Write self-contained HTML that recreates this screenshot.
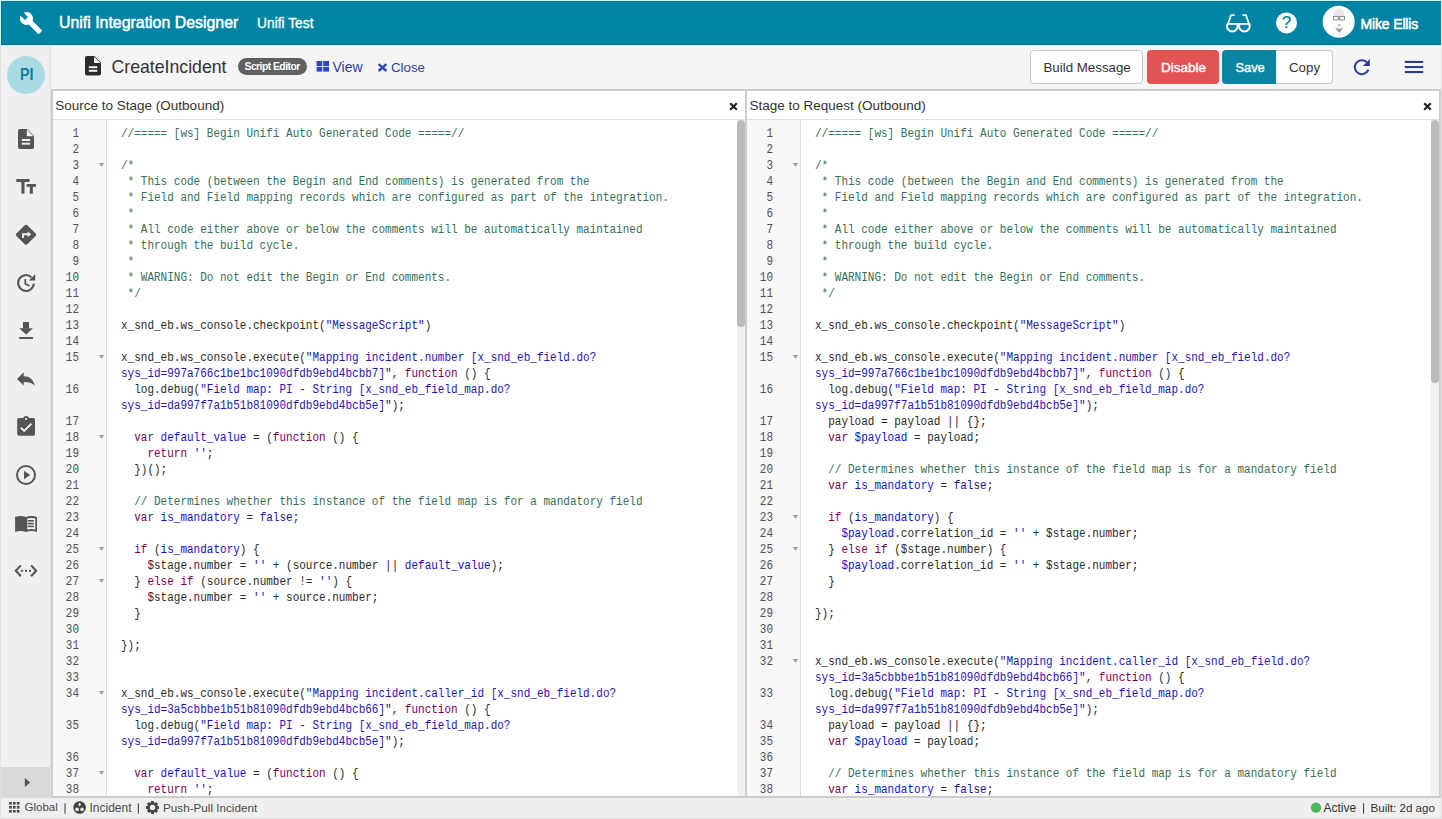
<!DOCTYPE html>
<html><head><meta charset="utf-8">
<style>
*{box-sizing:border-box;margin:0;padding:0}
html,body{width:1442px;height:819px;overflow:hidden;background:#e0e0e0;font-family:"Liberation Sans",sans-serif;position:relative}
.a{position:absolute;white-space:nowrap;line-height:1}
svg{position:absolute;overflow:visible}
#hdr{position:absolute;left:1px;top:1px;width:1440px;height:44px;background:#0084a3;border:1px solid #1d6f86;border-right-color:#2a7a90}
#hdrline{position:absolute;left:1px;top:45px;width:1440px;height:1px;background:#b8ecf6}
#app{position:absolute;left:1px;top:46px;width:1440px;height:772px;background:#f2f2f2}
#side{position:absolute;left:1px;top:46px;width:50px;height:751px;background:#efefef;border-right:1px solid #e0e0e0}
#tool{position:absolute;left:51px;top:46px;width:1390px;height:43px;background:#f5f5f5}
.panel{position:absolute;top:89px;height:709px;background:#fff;border:2px solid #cccccc}
#pl{left:51px;width:696px}
#pr{left:745px;width:696px}
.ph{position:absolute;left:0;top:0;right:0;height:29px;border-bottom:1px solid #dedede;background:#fff}
.ed{position:absolute;left:0;top:29px;right:0;bottom:0;overflow:hidden}
.gut{position:absolute;left:0;top:0;width:54px;bottom:0;background:#f7f7f7;border-right:1px solid #dddddd}
.code{position:absolute;left:68px;top:0;right:0;bottom:0}
.ln{position:absolute;left:0;width:26px;text-align:right;font-family:"Liberation Mono",monospace;font-size:12px;line-height:16px;color:#505050;white-space:pre;transform:scaleX(0.9167);transform-origin:100% 0;padding-top:0.2px}
.fd{position:absolute;left:46px;width:6px;height:5px}
.cl{position:absolute;left:0;font-family:"Liberation Mono",monospace;font-size:12px;line-height:16px;color:#2a2a2a;white-space:pre;transform:scaleX(0.91667);transform-origin:0 0}
.cm{color:#35705a}
.kw{color:#7f0055}
.st{color:#2a14b4}
.df{color:#1414cc}
.v2{color:#1010c0}
.at{color:#221199}
.sbt{position:absolute;top:0;bottom:0;width:8px;background:#f1f1f1}
.thumb{position:absolute;left:0;top:0;width:8px;background:#bbbbbb;border-radius:4px}
#status{position:absolute;left:1px;top:798px;width:1440px;height:20px;background:#efefef}
.btn{position:absolute;top:50px;height:34px;border-radius:4px}
</style></head><body>
<div id="app"></div>
<div style="position:absolute;left:0;top:0;width:1442px;height:46px;background:#c4f9ff"></div>

<!-- ===== HEADER ===== -->
<div id="hdr"></div>
<div id="hdrline"></div>
<svg style="left:19px;top:11px" width="24" height="24" viewBox="0 0 24 24"><path fill="#fff" d="M22.7 19l-9.1-9.1c.9-2.3.4-5-1.5-6.9-2-2-5-2.4-7.4-1.3L9 6 6 9 1.6 4.7C.4 7.1.9 10.1 2.9 12.1c1.9 1.9 4.6 2.4 6.9 1.5l9.1 9.1c.4.4 1 .4 1.4 0l2.3-2.3c.5-.4.5-1.1.1-1.4z"/></svg>
<div class="a" style="left:59px;top:15.2px;font-size:15.9px;color:#fff;-webkit-text-stroke:0.5px #fff">Unifi Integration Designer</div>
<div class="a" style="left:257px;top:17px;font-size:13.8px;color:#fff;-webkit-text-stroke:0.3px #fff">Unifi Test</div>
<!-- glasses -->
<svg style="left:0;top:0" width="1442" height="45"><g fill="none" stroke="#fff" stroke-width="1.8">
<path d="M1227.4 24.2 A5.3 5.3 0 1 0 1237.2 24.2 M1239.5 24.2 A5.3 5.3 0 1 0 1249.3 24.2" stroke-width="2"/><path d="M1227 23.9 H1249.8" stroke-width="1.8"/>
<path d="M1227.6 25 L1231 15.2 L1234.6 15.2 M1249.4 25 L1246 15.2 L1242.4 15.2" stroke-linejoin="round"/>
</g>
<circle cx="1286.5" cy="22.9" r="10.5" fill="#fff"/>
<circle cx="1338.7" cy="21.8" r="16" fill="#fff"/>
<path d="M1333.2 15.2 Q1333.5 8.3 1338.8 8.3 Q1344.2 8.3 1344.4 15.2 Z" fill="#e9e9e9"/>
<g fill="none" stroke="#8f8f8f" stroke-width="1.1"><rect x="1333.6" y="16.4" width="4.9" height="3.6" rx="0.6"/><rect x="1339.6" y="16.4" width="4.9" height="3.6" rx="0.6"/></g>
<path d="M1337.4 24.2 H1341 L1340.2 26.2 H1338.2 Z" fill="#b5b5b5"/>
<path d="M1335.2 27 Q1339 30.5 1343.2 27 Q1341.5 31.5 1339.3 32.5 Q1337 31.5 1335.2 27 Z" fill="#a0a0a0"/>
<path d="M1338 32.5 H1340.6 L1340.2 36.5 H1338.4 Z" fill="#ececec"/>
</svg>
<div class="a" style="left:1281.8px;top:14.4px;font-size:17px;color:#0084a3;-webkit-text-stroke:0.2px #0084a3">?</div>
<div class="a" style="left:1360.5px;top:16.8px;font-size:14px;color:#fff;-webkit-text-stroke:0.55px #fff;letter-spacing:-0.15px">Mike Ellis</div>

<!-- ===== SIDEBAR ===== -->
<div id="side"></div>
<div style="position:absolute;left:7px;top:56px;width:38px;height:38px;border-radius:50%;background:#aadbe4"></div>
<div class="a" style="left:19.5px;top:66.6px;font-size:16.6px;font-weight:bold;color:#12809f;transform:scaleX(0.86);transform-origin:0 0">PI</div>
<div style="position:absolute;left:1px;top:767px;width:49px;height:31px;background:#d9d9d9"></div>
<svg style="left:0;top:0" width="52" height="800">
<g fill="#555">
 <!-- doc -->
 <path d="M18 131 Q18 129 20 129 H27 L34 136 V147 Q34 149 32 149 H20 Q18 149 18 147 Z"/>
 <path d="M26.8 129.6 V136.2 H33.4 Z" fill="#f0f0f0"/>
 <rect x="21.8" y="139" width="8.4" height="2" fill="#efefef"/><rect x="21.8" y="142.7" width="8.4" height="2" fill="#efefef"/>
 <!-- Tt -->
 <rect x="16.3" y="179" width="13.2" height="3"/><rect x="21.4" y="179" width="3.1" height="14.7"/>
 <rect x="26.6" y="184" width="9.3" height="2.8"/><rect x="29.8" y="184" width="3" height="9.7"/>
 <!-- diamond -->
 <path d="M26 224.8 Q26.9 224.8 27.5 225.4 L35.6 233.5 Q36.8 234.7 35.6 235.9 L27.5 244 Q26 245.5 24.5 244 L16.4 235.9 Q15.2 234.7 16.4 233.5 L24.5 225.4 Q25.1 224.8 26 224.8 Z"/>
 <path d="M22 238 V233.3 H27.6 V231.4 L31.4 234.2 L27.6 237 V235.2 H24 V238 Z" fill="#efefef"/>
 <!-- download -->
 <rect x="23" y="322" width="6" height="6.5"/><path d="M19.2 328.2 H32.9 L26.1 334.6 Z"/><rect x="19.2" y="337" width="13.7" height="2"/>
 <!-- reply -->
 <path d="M17 379 L23.7 372.2 V376.2 C29.5 376.2 33.5 379.5 34.8 385.7 C32.5 382.8 28.5 382 23.7 382 V385.4 Z"/>
 <!-- clipboard -->
 <rect x="17.2" y="417.9" width="17.8" height="17.8" rx="1.6"/>
 <circle cx="26.1" cy="418.9" r="2.9"/>
 <circle cx="26.1" cy="419" r="1.1" fill="#efefef"/>
 <path d="M20.8 427.8 L24.2 430.9 L31.5 423.6" fill="none" stroke="#efefef" stroke-width="2"/>
 <!-- play -->
 <path d="M24 470.8 L30.2 475 L24 479.2 Z"/>
 <!-- book -->
 <path d="M15.1 517 Q20.5 515 26 517 V532 Q20.5 529.8 15.1 532 Z"/>
 <path d="M26 517 Q31.5 515 37 517 V532 Q31.5 529.8 26 532 Z"/>
 <path d="M27.3 518.6 Q31.5 517.2 35.3 518.6 V529.6 Q31.5 528.6 27.3 529.6 Z" fill="#f4f4f4"/>
 <rect x="27.8" y="520" width="6" height="1.6"/><rect x="27.8" y="522.8" width="6" height="1.6"/><rect x="27.8" y="525.6" width="6" height="1.6"/>
 <!-- code dots -->
 <rect x="21.1" y="569.8" width="2" height="2"/><rect x="25" y="569.8" width="2" height="2"/><rect x="29" y="569.8" width="2" height="2"/>
 <!-- collapse triangle -->
 <path d="M24.8 778 L30.2 782.5 L24.8 787 Z"/>
</g>
<g fill="none" stroke="#555" stroke-width="2">
 <path d="M33.9 283.7 A7.9 7.9 0 1 1 31.6 277.4"/>
 <path d="M25.3 279 V283.8 L29.5 286" stroke-width="1.7"/>
 <circle cx="26" cy="475" r="9"/>
 <path d="M20.9 565.4 L15.8 570.8 L20.9 576.3 M31.1 565.4 L36.2 570.8 L31.1 576.3" stroke-width="2.1"/>
</g>
<path d="M28.8 280.6 H35.2 V274.2 Z" fill="#555"/>
</svg>

<!-- ===== TOOLBAR ===== -->
<div id="tool"></div>
<svg style="left:0;top:0" width="1442" height="89">
 <path d="M85 58 Q85 56 87 56 H94.5 L101 62.5 V73.5 Q101 75.5 99 75.5 H87 Q85 75.5 85 73.5 Z" fill="#2b2b2b"/>
 <path d="M94 56.6 V63 H100.4 Z" fill="#f5f5f5"/>
 <rect x="88.8" y="66.2" width="8.4" height="2" fill="#f5f5f5"/><rect x="88.8" y="69.8" width="8.4" height="2" fill="#f5f5f5"/>
 <rect x="238" y="58" width="69" height="17" rx="8.5" fill="#606060"/>
 <g fill="#2e45b8"><rect x="316.6" y="61" width="5.6" height="5"/><rect x="323.2" y="61" width="5.8" height="5"/><rect x="316.6" y="66.8" width="5.6" height="4.8"/><rect x="323.2" y="66.8" width="5.8" height="4.8"/></g>
 <path d="M378.6 64.2 L386.4 71 M386.4 64.2 L378.6 71" stroke="#2e45b8" stroke-width="2.4"/>
 <!-- refresh -->
 <path d="M1368.4 69.6 A7 7 0 1 1 1366.6 62" fill="none" stroke="#2c3e9e" stroke-width="2"/>
 <path d="M1362.9 66 H1369.8 V59 Z" fill="#2c3e9e"/>
 <g fill="#2a3a8c"><rect x="1404.8" y="60.9" width="18.4" height="2.1"/><rect x="1404.8" y="66" width="18.4" height="2.1"/><rect x="1404.8" y="71" width="18.4" height="2.1"/></g>
</svg>
<div class="a" style="left:111.5px;top:59.2px;font-size:17.7px;color:#333">CreateIncident</div>
<div class="a" style="left:244.5px;top:62.4px;font-size:10.4px;font-weight:bold;color:#fff;letter-spacing:-0.55px">Script Editor</div>
<div class="a" style="left:332.5px;top:60px;font-size:14px;color:#2c3fa6">View</div>
<div class="a" style="left:391px;top:61px;font-size:13.3px;color:#2c3fa6">Close</div>
<div class="btn" style="left:1030px;width:113px;background:#fff;border:1px solid #c8c8c8"></div>
<div class="a" style="left:1043.5px;top:60.5px;font-size:13.3px;color:#333">Build Message</div>
<div class="btn" style="left:1147px;width:72px;background:#e25454"></div>
<div class="a" style="left:1161px;top:60.5px;font-size:13.5px;color:#fff;-webkit-text-stroke:0.4px #fff">Disable</div>
<div class="btn" style="left:1222px;width:56px;border-radius:4px 0 0 4px;background:#0a84a3"></div>
<div class="btn" style="left:1276px;width:57px;border-radius:0 4px 4px 0;background:#fff;border:1px solid #c8c8c8;border-left:none"></div>
<div class="a" style="left:1235.5px;top:61.8px;font-size:12.8px;color:#fff;-webkit-text-stroke:0.4px #fff">Save</div>
<div class="a" style="left:1289px;top:60.5px;font-size:13.3px;color:#333">Copy</div>

<!-- ===== PANELS ===== -->
<div id="pl" class="panel">
  <div class="ph"><div class="a" style="left:2.3px;top:8px;font-size:13.5px;color:#333">Source to Stage (Outbound)</div>
  <svg style="left:676px;top:11px" width="10" height="10"><path d="M1.2 1.2 L7.8 7.8 M7.8 1.2 L1.2 7.8" stroke="#222" stroke-width="2.2"/></svg></div>
  <div class="ed">
    <div class="gut">
<div class="ln" style="top:5.6px">1</div>
<div class="ln" style="top:21.6px">2</div>
<div class="ln" style="top:37.6px">3</div>
<svg class="fd" style="top:42.9px" width="6" height="5"><path d="M0 0 H5 L2.5 3.8 Z" fill="#999"/></svg>
<div class="ln" style="top:53.6px">4</div>
<div class="ln" style="top:69.6px">5</div>
<div class="ln" style="top:85.6px">6</div>
<div class="ln" style="top:101.6px">7</div>
<div class="ln" style="top:117.6px">8</div>
<div class="ln" style="top:133.6px">9</div>
<div class="ln" style="top:149.6px">10</div>
<div class="ln" style="top:165.6px">11</div>
<div class="ln" style="top:181.6px">12</div>
<div class="ln" style="top:197.6px">13</div>
<div class="ln" style="top:213.6px">14</div>
<div class="ln" style="top:229.6px">15</div>
<svg class="fd" style="top:234.9px" width="6" height="5"><path d="M0 0 H5 L2.5 3.8 Z" fill="#999"/></svg>
<div class="ln" style="top:261.6px">16</div>
<div class="ln" style="top:293.6px">17</div>
<div class="ln" style="top:309.6px">18</div>
<svg class="fd" style="top:314.90000000000003px" width="6" height="5"><path d="M0 0 H5 L2.5 3.8 Z" fill="#999"/></svg>
<div class="ln" style="top:325.6px">19</div>
<div class="ln" style="top:341.6px">20</div>
<div class="ln" style="top:357.6px">21</div>
<div class="ln" style="top:373.6px">22</div>
<div class="ln" style="top:389.6px">23</div>
<div class="ln" style="top:405.6px">24</div>
<div class="ln" style="top:421.6px">25</div>
<svg class="fd" style="top:426.90000000000003px" width="6" height="5"><path d="M0 0 H5 L2.5 3.8 Z" fill="#999"/></svg>
<div class="ln" style="top:437.6px">26</div>
<div class="ln" style="top:453.6px">27</div>
<svg class="fd" style="top:458.90000000000003px" width="6" height="5"><path d="M0 0 H5 L2.5 3.8 Z" fill="#999"/></svg>
<div class="ln" style="top:469.6px">28</div>
<div class="ln" style="top:485.6px">29</div>
<div class="ln" style="top:501.6px">30</div>
<div class="ln" style="top:517.6px">31</div>
<div class="ln" style="top:533.6px">32</div>
<div class="ln" style="top:549.6px">33</div>
<div class="ln" style="top:565.6px">34</div>
<svg class="fd" style="top:570.9px" width="6" height="5"><path d="M0 0 H5 L2.5 3.8 Z" fill="#999"/></svg>
<div class="ln" style="top:597.6px">35</div>
<div class="ln" style="top:629.6px">36</div>
<div class="ln" style="top:645.6px">37</div>
<svg class="fd" style="top:650.9px" width="6" height="5"><path d="M0 0 H5 L2.5 3.8 Z" fill="#999"/></svg>
<div class="ln" style="top:661.6px">38</div>
    </div>
    <div class="code">
<div class="cl" style="top:5.6px"><span class="cm">//===== [ws] Begin Unifi Auto Generated Code =====//</span></div>
<div class="cl" style="top:21.6px"></div>
<div class="cl" style="top:37.6px"><span class="cm">/*</span></div>
<div class="cl" style="top:53.6px"><span class="cm"> * This code (between the Begin and End comments) is generated from the</span></div>
<div class="cl" style="top:69.6px"><span class="cm"> * Field and Field mapping records which are configured as part of the integration.</span></div>
<div class="cl" style="top:85.6px"><span class="cm"> *</span></div>
<div class="cl" style="top:101.6px"><span class="cm"> * All code either above or below the comments will be automatically maintained</span></div>
<div class="cl" style="top:117.6px"><span class="cm"> * through the build cycle.</span></div>
<div class="cl" style="top:133.6px"><span class="cm"> *</span></div>
<div class="cl" style="top:149.6px"><span class="cm"> * WARNING: Do not edit the Begin or End comments.</span></div>
<div class="cl" style="top:165.6px"><span class="cm"> */</span></div>
<div class="cl" style="top:181.6px"></div>
<div class="cl" style="top:197.6px">x_snd_eb.ws_console.checkpoint(<span class="st">&quot;MessageScript&quot;</span>)</div>
<div class="cl" style="top:213.6px"></div>
<div class="cl" style="top:229.6px">x_snd_eb.ws_console.execute(<span class="st">&quot;Mapping incident.number [x_snd_eb_field.do?</span></div>
<div class="cl" style="top:245.6px"><span class="st">sys_id=997a766c1be1bc1090dfdb9ebd4bcbb7]&quot;</span>, <span class="kw">function</span> () {</div>
<div class="cl" style="top:261.6px">  log.debug(<span class="st">&quot;Field map: PI - String [x_snd_eb_field_map.do?</span></div>
<div class="cl" style="top:277.6px"><span class="st">sys_id=da997f7a1b51b81090dfdb9ebd4bcb5e]&quot;</span>);</div>
<div class="cl" style="top:293.6px"></div>
<div class="cl" style="top:309.6px">  <span class="kw">var</span> <span class="df">default_value</span> = (<span class="kw">function</span> () {</div>
<div class="cl" style="top:325.6px">    <span class="kw">return</span> <span class="st">&#x27;&#x27;</span>;</div>
<div class="cl" style="top:341.6px">  })();</div>
<div class="cl" style="top:357.6px"></div>
<div class="cl" style="top:373.6px">  <span class="cm">// Determines whether this instance of the field map is for a mandatory field</span></div>
<div class="cl" style="top:389.6px">  <span class="kw">var</span> <span class="df">is_mandatory</span> = <span class="at">false</span>;</div>
<div class="cl" style="top:405.6px"></div>
<div class="cl" style="top:421.6px">  <span class="kw">if</span> (<span class="v2">is_mandatory</span>) {</div>
<div class="cl" style="top:437.6px">    $stage.number = <span class="st">&#x27;&#x27;</span> + (source.number || <span class="v2">default_value</span>);</div>
<div class="cl" style="top:453.6px">  } <span class="kw">else</span> <span class="kw">if</span> (source.number != <span class="st">&#x27;&#x27;</span>) {</div>
<div class="cl" style="top:469.6px">    $stage.number = <span class="st">&#x27;&#x27;</span> + source.number;</div>
<div class="cl" style="top:485.6px">  }</div>
<div class="cl" style="top:501.6px"></div>
<div class="cl" style="top:517.6px">});</div>
<div class="cl" style="top:533.6px"></div>
<div class="cl" style="top:549.6px"></div>
<div class="cl" style="top:565.6px">x_snd_eb.ws_console.execute(<span class="st">&quot;Mapping incident.caller_id [x_snd_eb_field.do?</span></div>
<div class="cl" style="top:581.6px"><span class="st">sys_id=3a5cbbbe1b51b81090dfdb9ebd4bcb66]&quot;</span>, <span class="kw">function</span> () {</div>
<div class="cl" style="top:597.6px">  log.debug(<span class="st">&quot;Field map: PI - String [x_snd_eb_field_map.do?</span></div>
<div class="cl" style="top:613.6px"><span class="st">sys_id=da997f7a1b51b81090dfdb9ebd4bcb5e]&quot;</span>);</div>
<div class="cl" style="top:629.6px"></div>
<div class="cl" style="top:645.6px">  <span class="kw">var</span> <span class="df">default_value</span> = (<span class="kw">function</span> () {</div>
<div class="cl" style="top:661.6px">    <span class="kw">return</span> <span class="st">&#x27;&#x27;</span>;</div>
    </div>
    <div class="sbt" style="right:0"><div class="thumb" style="height:207px"></div></div>
  </div>
</div>
<div id="pr" class="panel">
  <div class="ph"><div class="a" style="left:2.4px;top:8px;font-size:13.5px;color:#333">Stage to Request (Outbound)</div>
  <svg style="left:676px;top:11px" width="10" height="10"><path d="M1.2 1.2 L7.8 7.8 M7.8 1.2 L1.2 7.8" stroke="#222" stroke-width="2.2"/></svg></div>
  <div class="ed">
    <div class="gut">
<div class="ln" style="top:5.6px">1</div>
<div class="ln" style="top:21.6px">2</div>
<div class="ln" style="top:37.6px">3</div>
<svg class="fd" style="top:42.9px" width="6" height="5"><path d="M0 0 H5 L2.5 3.8 Z" fill="#999"/></svg>
<div class="ln" style="top:53.6px">4</div>
<div class="ln" style="top:69.6px">5</div>
<div class="ln" style="top:85.6px">6</div>
<div class="ln" style="top:101.6px">7</div>
<div class="ln" style="top:117.6px">8</div>
<div class="ln" style="top:133.6px">9</div>
<div class="ln" style="top:149.6px">10</div>
<div class="ln" style="top:165.6px">11</div>
<div class="ln" style="top:181.6px">12</div>
<div class="ln" style="top:197.6px">13</div>
<div class="ln" style="top:213.6px">14</div>
<div class="ln" style="top:229.6px">15</div>
<svg class="fd" style="top:234.9px" width="6" height="5"><path d="M0 0 H5 L2.5 3.8 Z" fill="#999"/></svg>
<div class="ln" style="top:261.6px">16</div>
<div class="ln" style="top:293.6px">17</div>
<div class="ln" style="top:309.6px">18</div>
<div class="ln" style="top:325.6px">19</div>
<div class="ln" style="top:341.6px">20</div>
<div class="ln" style="top:357.6px">21</div>
<div class="ln" style="top:373.6px">22</div>
<div class="ln" style="top:389.6px">23</div>
<svg class="fd" style="top:394.90000000000003px" width="6" height="5"><path d="M0 0 H5 L2.5 3.8 Z" fill="#999"/></svg>
<div class="ln" style="top:405.6px">24</div>
<div class="ln" style="top:421.6px">25</div>
<svg class="fd" style="top:426.90000000000003px" width="6" height="5"><path d="M0 0 H5 L2.5 3.8 Z" fill="#999"/></svg>
<div class="ln" style="top:437.6px">26</div>
<div class="ln" style="top:453.6px">27</div>
<div class="ln" style="top:469.6px">28</div>
<div class="ln" style="top:485.6px">29</div>
<div class="ln" style="top:501.6px">30</div>
<div class="ln" style="top:517.6px">31</div>
<div class="ln" style="top:533.6px">32</div>
<svg class="fd" style="top:538.9px" width="6" height="5"><path d="M0 0 H5 L2.5 3.8 Z" fill="#999"/></svg>
<div class="ln" style="top:565.6px">33</div>
<div class="ln" style="top:597.6px">34</div>
<div class="ln" style="top:613.6px">35</div>
<div class="ln" style="top:629.6px">36</div>
<div class="ln" style="top:645.6px">37</div>
<div class="ln" style="top:661.6px">38</div>
    </div>
    <div class="code">
<div class="cl" style="top:5.6px"><span class="cm">//===== [ws] Begin Unifi Auto Generated Code =====//</span></div>
<div class="cl" style="top:21.6px"></div>
<div class="cl" style="top:37.6px"><span class="cm">/*</span></div>
<div class="cl" style="top:53.6px"><span class="cm"> * This code (between the Begin and End comments) is generated from the</span></div>
<div class="cl" style="top:69.6px"><span class="cm"> * Field and Field mapping records which are configured as part of the integration.</span></div>
<div class="cl" style="top:85.6px"><span class="cm"> *</span></div>
<div class="cl" style="top:101.6px"><span class="cm"> * All code either above or below the comments will be automatically maintained</span></div>
<div class="cl" style="top:117.6px"><span class="cm"> * through the build cycle.</span></div>
<div class="cl" style="top:133.6px"><span class="cm"> *</span></div>
<div class="cl" style="top:149.6px"><span class="cm"> * WARNING: Do not edit the Begin or End comments.</span></div>
<div class="cl" style="top:165.6px"><span class="cm"> */</span></div>
<div class="cl" style="top:181.6px"></div>
<div class="cl" style="top:197.6px">x_snd_eb.ws_console.checkpoint(<span class="st">&quot;MessageScript&quot;</span>)</div>
<div class="cl" style="top:213.6px"></div>
<div class="cl" style="top:229.6px">x_snd_eb.ws_console.execute(<span class="st">&quot;Mapping incident.number [x_snd_eb_field.do?</span></div>
<div class="cl" style="top:245.6px"><span class="st">sys_id=997a766c1be1bc1090dfdb9ebd4bcbb7]&quot;</span>, <span class="kw">function</span> () {</div>
<div class="cl" style="top:261.6px">  log.debug(<span class="st">&quot;Field map: PI - String [x_snd_eb_field_map.do?</span></div>
<div class="cl" style="top:277.6px"><span class="st">sys_id=da997f7a1b51b81090dfdb9ebd4bcb5e]&quot;</span>);</div>
<div class="cl" style="top:293.6px">  payload = payload || {};</div>
<div class="cl" style="top:309.6px">  <span class="kw">var</span> <span class="df">$payload</span> = payload;</div>
<div class="cl" style="top:325.6px"></div>
<div class="cl" style="top:341.6px">  <span class="cm">// Determines whether this instance of the field map is for a mandatory field</span></div>
<div class="cl" style="top:357.6px">  <span class="kw">var</span> <span class="df">is_mandatory</span> = <span class="at">false</span>;</div>
<div class="cl" style="top:373.6px"></div>
<div class="cl" style="top:389.6px">  <span class="kw">if</span> (<span class="v2">is_mandatory</span>) {</div>
<div class="cl" style="top:405.6px">    <span class="v2">$payload</span>.correlation_id = <span class="st">&#x27;&#x27;</span> + $stage.number;</div>
<div class="cl" style="top:421.6px">  } <span class="kw">else</span> <span class="kw">if</span> ($stage.number) {</div>
<div class="cl" style="top:437.6px">    <span class="v2">$payload</span>.correlation_id = <span class="st">&#x27;&#x27;</span> + $stage.number;</div>
<div class="cl" style="top:453.6px">  }</div>
<div class="cl" style="top:469.6px"></div>
<div class="cl" style="top:485.6px">});</div>
<div class="cl" style="top:501.6px"></div>
<div class="cl" style="top:517.6px"></div>
<div class="cl" style="top:533.6px">x_snd_eb.ws_console.execute(<span class="st">&quot;Mapping incident.caller_id [x_snd_eb_field.do?</span></div>
<div class="cl" style="top:549.6px"><span class="st">sys_id=3a5cbbbe1b51b81090dfdb9ebd4bcb66]&quot;</span>, <span class="kw">function</span> () {</div>
<div class="cl" style="top:565.6px">  log.debug(<span class="st">&quot;Field map: PI - String [x_snd_eb_field_map.do?</span></div>
<div class="cl" style="top:581.6px"><span class="st">sys_id=da997f7a1b51b81090dfdb9ebd4bcb5e]&quot;</span>);</div>
<div class="cl" style="top:597.6px">  payload = payload || {};</div>
<div class="cl" style="top:613.6px">  <span class="kw">var</span> <span class="df">$payload</span> = payload;</div>
<div class="cl" style="top:629.6px"></div>
<div class="cl" style="top:645.6px">  <span class="cm">// Determines whether this instance of the field map is for a mandatory field</span></div>
<div class="cl" style="top:661.6px">  <span class="kw">var</span> <span class="df">is_mandatory</span> = <span class="at">false</span>;</div>
    </div>
    <div class="sbt" style="right:0"><div class="thumb" style="height:263px"></div></div>
  </div>
</div>

<!-- ===== STATUS ===== -->
<div id="status"></div>
<svg style="left:0;top:0" width="1442" height="819">
 <g fill="#444">
  <rect x="9.2" y="802" width="2.6" height="2.6"/><rect x="13" y="802" width="2.6" height="2.6"/><rect x="16.9" y="802" width="2.6" height="2.6"/>
  <rect x="9.2" y="806" width="2.6" height="2.6"/><rect x="13" y="806" width="2.6" height="2.6"/><rect x="16.9" y="806" width="2.6" height="2.6"/>
  <rect x="9.2" y="810" width="2.6" height="2.6"/><rect x="13" y="810" width="2.6" height="2.6"/><rect x="16.9" y="810" width="2.6" height="2.6"/>
  <circle cx="79.6" cy="807.5" r="6.3"/>
 </g>
 <g fill="#efefef"><path d="M79.6 802.6 L81 804.5 L79.6 806.4 L78.2 804.5 Z"/><circle cx="77.1" cy="809.4" r="1.8"/><circle cx="82.1" cy="809.4" r="1.8"/></g>
 <g transform="translate(152.5 807.5)">
  <path fill="#444" d="M-1.69 -4.49 L-1.44 -6.44 L1.44 -6.44 L1.69 -4.49 L1.98 -4.37 L3.54 -5.57 L5.57 -3.54 L4.37 -1.98 L4.49 -1.69 L6.44 -1.44 L6.44 1.44 L4.49 1.69 L4.37 1.98 L5.57 3.54 L3.54 5.57 L1.98 4.37 L1.69 4.49 L1.44 6.44 L-1.44 6.44 L-1.69 4.49 L-1.98 4.37 L-3.54 5.57 L-5.57 3.54 L-4.37 1.98 L-4.49 1.69 L-6.44 1.44 L-6.44 -1.44 L-4.49 -1.69 L-4.37 -1.98 L-5.57 -3.54 L-3.54 -5.57 L-1.98 -4.37 Z"/>
  <circle r="2.7" fill="#efefef"/>
 </g>
 <circle cx="1316" cy="807.6" r="5.2" fill="#4bb65b"/>
 <g fill="#444"><rect x="64.5" y="803.3" width="1.1" height="10.3"/><rect x="137.8" y="803.3" width="1.1" height="10.3"/><rect x="1363" y="803.3" width="1.1" height="10.3"/></g>
</svg>
<div class="a" style="left:24.5px;top:802.3px;font-size:11.5px;color:#4a4a4a">Global</div>
<div class="a" style="left:89.5px;top:802px;font-size:12px;color:#4a4a4a">Incident</div>
<div class="a" style="left:163px;top:802px;font-size:11.7px;color:#4a4a4a">Push-Pull Incident</div>
<div class="a" style="left:1323.5px;top:801.6px;font-size:12px;color:#333">Active</div>
<div class="a" style="left:1370.5px;top:802.4px;font-size:11.6px;color:#333">Built: 2d ago</div>
</body></html>
